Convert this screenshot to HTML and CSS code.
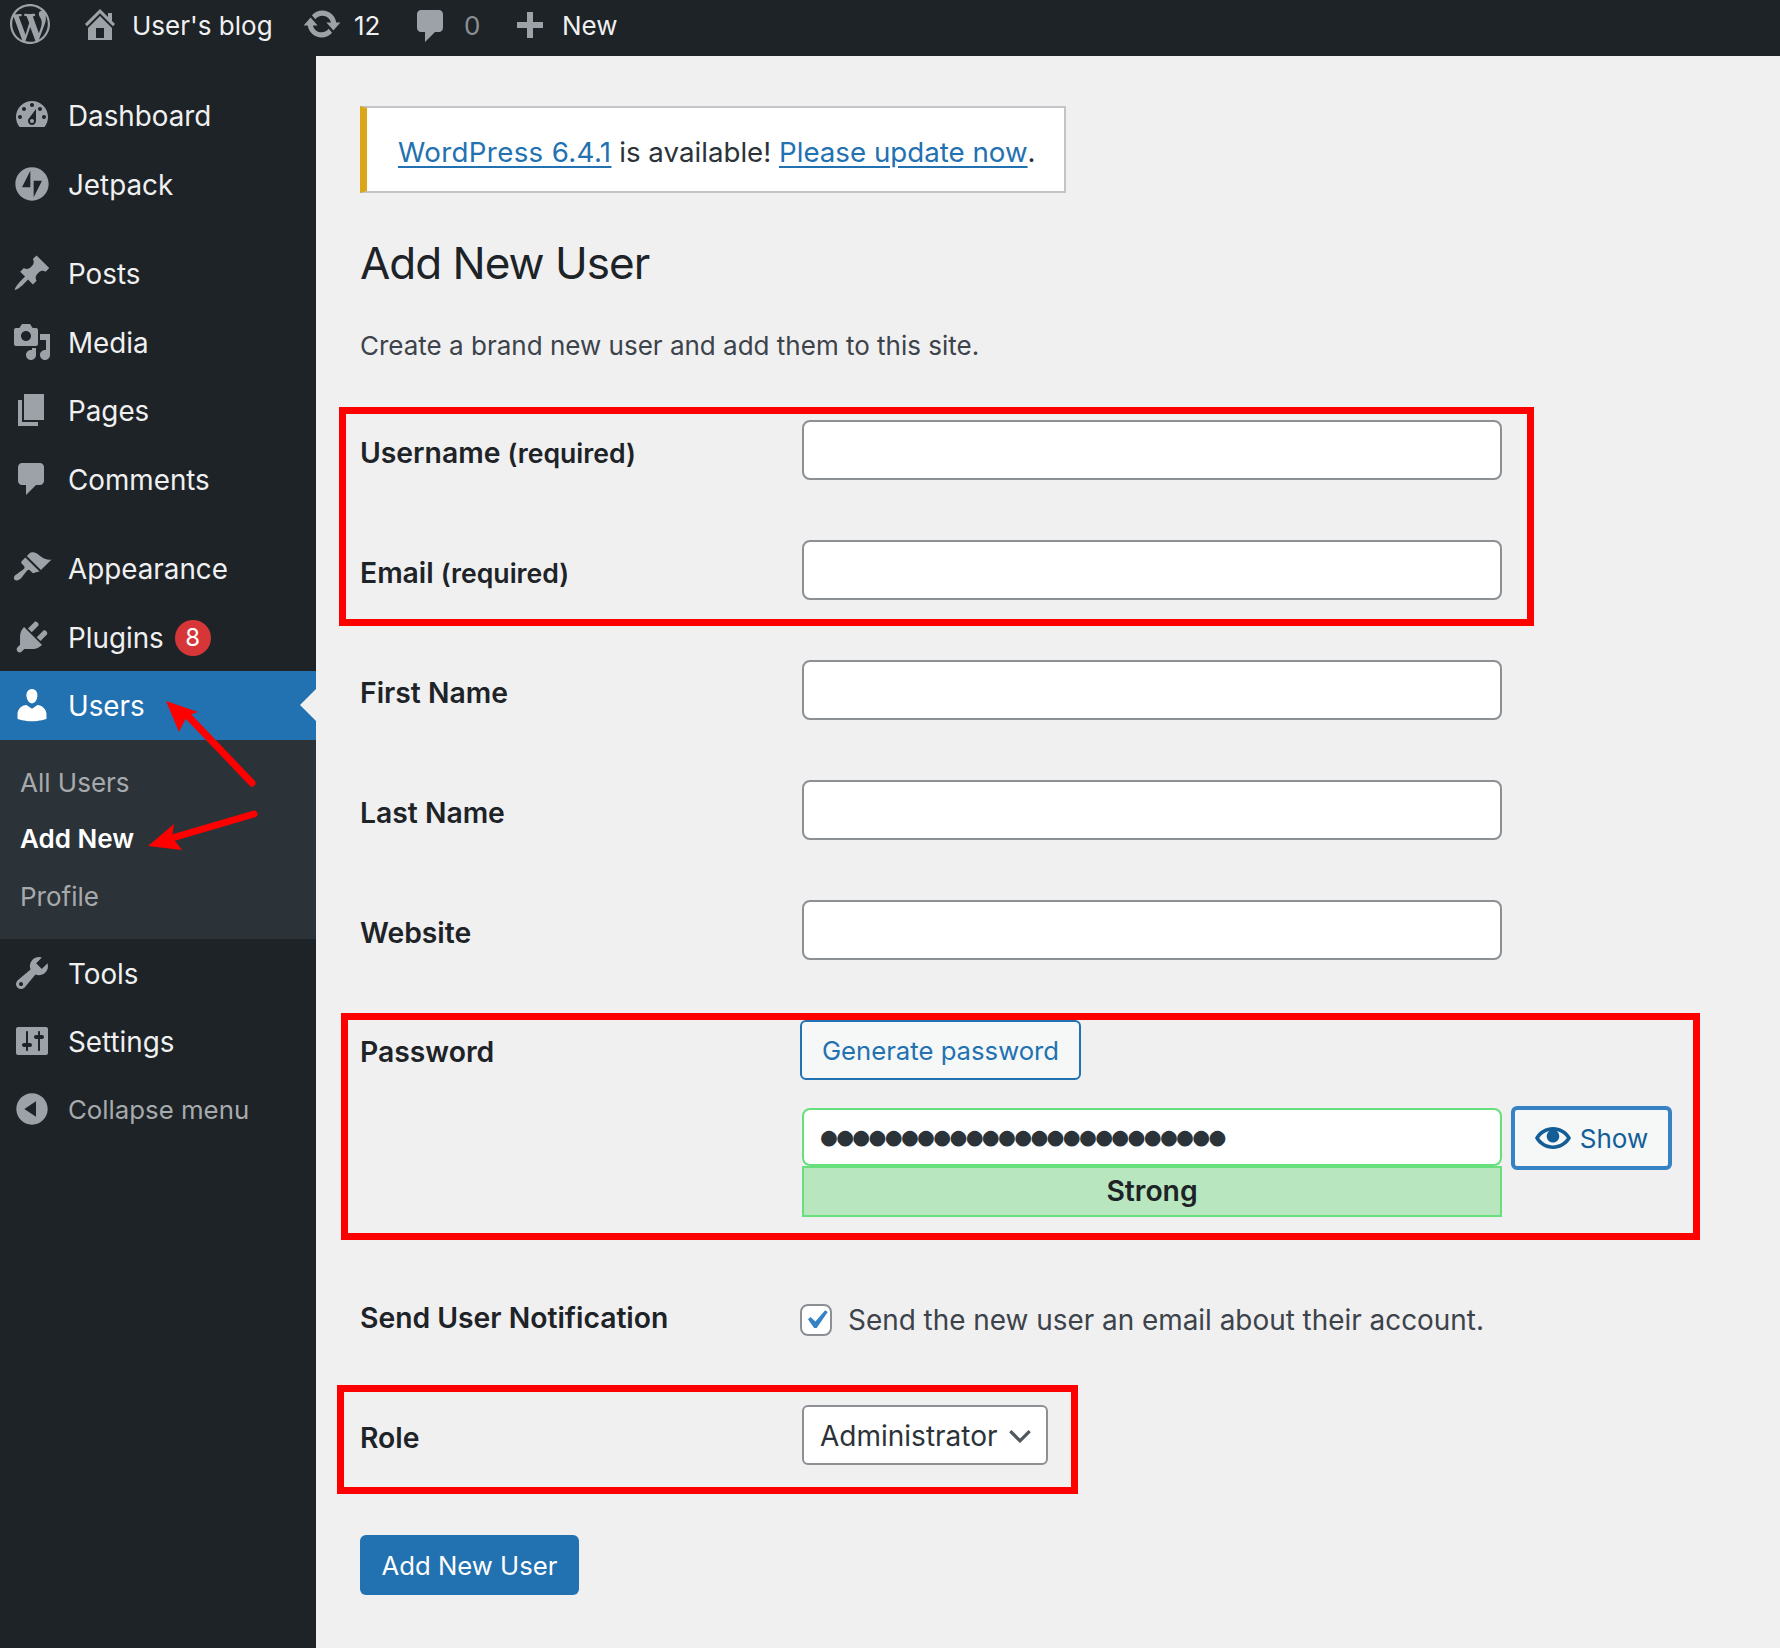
FILE: index.html
```html
<!DOCTYPE html>
<html lang="en">
<head>
<meta charset="utf-8">
<title>Add New User</title>
<link rel="stylesheet" href="styles.css">
</head>
<body>
<header class="topbar">
  <svg class="ti ti-wp" viewBox="0 0 20 20"><path d="M20 10c0-5.51-4.49-10-10-10C4.48 0 0 4.49 0 10c0 5.52 4.48 10 10 10 5.51 0 10-4.48 10-10zM7.78 15.37L4.37 6.22c.55-.02 1.17-.08 1.17-.08.5-.06.44-1.13-.06-1.11 0 0-1.45.11-2.37.11-.18 0-.37 0-.58-.01C4.12 2.69 6.87 1.11 10 1.11c2.33 0 4.45.87 6.05 2.34-.68-.11-1.65.39-1.65 1.58 0 .74.45 1.36.9 2.1.35.61.55 1.36.55 2.46 0 1.49-1.4 5-1.4 5l-3.03-8.37c.54-.02.82-.17.82-.17.5-.05.44-1.25-.06-1.22 0 0-1.44.12-2.38.12-.87 0-2.33-.12-2.33-.12-.5-.03-.56 1.2-.06 1.22l.92.08 1.26 3.41zM17.41 10c.24-.64.74-1.87.43-4.25.7 1.29 1.05 2.71 1.05 4.25 0 3.29-1.73 6.24-4.4 7.78.97-2.59 1.94-5.2 2.92-7.78zM6.1 18.09C3.12 16.65 1.11 13.53 1.11 10c0-1.3.23-2.48.72-3.59C3.25 10.3 4.67 14.2 6.1 18.09zm4.03-6.63l2.58 6.98c-.86.29-1.76.45-2.71.45-.79 0-1.57-.11-2.29-.33.81-2.38 1.62-4.74 2.42-7.1z"/></svg>
  <svg class="ti ti-home" viewBox="0 0 20 20"><path d="M16 8.5l1.53 1.53-1.06 1.06L10 4.62l-6.47 6.47-1.06-1.06L10 2.5l4 4v-2h2v4zm-6-2.46l6 5.99V18H4v-5.97zM12 17v-5H8v5h4z"/></svg>
  <span class="tt tt-blog">User's blog</span>
  <svg class="ti ti-update" viewBox="0 0 20 20"><path d="M10.2 3.28c3.53 0 6.43 2.61 6.92 6h2.08l-3.5 4-3.5-4h2.32c-.45-1.97-2.21-3.45-4.32-3.45-1.45 0-2.73.71-3.54 1.78L4.95 5.66C6.23 4.2 8.11 3.28 10.2 3.28zm-.4 13.44c-3.52 0-6.43-2.61-6.92-6H.8l3.5-4c1.17 1.33 2.33 2.67 3.5 4H5.48c.45 1.97 2.21 3.45 4.32 3.45 1.45 0 2.73-.71 3.54-1.78l1.71 1.95c-1.28 1.46-3.15 2.38-5.25 2.38z"/></svg>
  <span class="tt tt-count">12</span>
  <svg class="ti ti-comment" viewBox="0 0 20 20"><path d="M5 2h9c1.1 0 2 .9 2 2v7c0 1.1-.9 2-2 2h-2l-5 5v-5H5c-1.1 0-2-.9-2-2V4c0-1.1.9-2 2-2z"/></svg>
  <span class="tt tt-zero">0</span>
  <svg class="ti ti-plus" viewBox="0 0 20 20"><path d="M17 7v3h-5v5H9v-5H4V7h5V2h3v5h5z"/></svg>
  <span class="tt tt-new">New</span>
</header>

<div class="page">
  <nav class="sidebar">
    <ul class="menu">
      <li class="mi"><svg class="mic" viewBox="0 0 20 20"><path d="M3.76 16h12.48c1.1-1.37 1.76-3.11 1.76-5 0-4.42-3.58-8-8-8s-8 3.58-8 8c0 1.89.66 3.63 1.76 5zM10 4c.55 0 1 .45 1 1s-.45 1-1 1-1-.45-1-1 .45-1 1-1zM6 6c.55 0 1 .45 1 1s-.45 1-1 1-1-.45-1-1 .45-1 1-1zm8 0c.55 0 1 .45 1 1s-.45 1-1 1-1-.45-1-1 .45-1 1-1zm-5.37 5.55L12 7v6c0 1.1-.9 2-2 2s-2-.9-2-2c0-.57.24-1.08.63-1.45zM4 10c.55 0 1 .45 1 1s-.45 1-1 1-1-.45-1-1 .45-1 1-1zm12 0c.55 0 1 .45 1 1s-.45 1-1 1-1-.45-1-1 .45-1 1-1zm-5 3c0-.55-.45-1-1-1s-1 .45-1 1 .45 1 1 1 1-.45 1-1z" fill-rule="evenodd"/></svg>Dashboard</li>
      <li class="mi"><svg class="mic" viewBox="0 0 24 24"><path d="M12 2C6.477 2 2 6.477 2 12c0 5.523 4.477 10 10 10s10-4.477 10-10C22 6.477 17.523 2 12 2zM11 14H6l5-10v10zM13 20V10h5l-5 10z"/></svg>Jetpack</li>
      <li class="mi mi-gap"><svg class="mic" viewBox="0 0 20 20"><path d="M10.44 3.02l1.82-1.82 6.36 6.35-1.83 1.82c-1.05-.68-2.48-.57-3.41.36l-.75.75c-.92.93-1.04 2.35-.35 3.41l-1.83 1.82-2.41-2.41-2.8 2.79c-.42.42-3.38 2.71-3.8 2.29s1.86-3.39 2.28-3.81l2.79-2.79L4.1 9.36l1.83-1.82c1.05.69 2.48.57 3.4-.36l.75-.75c.93-.92 1.05-2.35.36-3.41z"/></svg>Posts</li>
      <li class="mi"><svg class="mic" viewBox="0 0 20 20"><path d="M13 11V4c0-.55-.45-1-1-1h-1.67L9 1H5L3.67 3H2c-.55 0-1 .45-1 1v7c0 .55.45 1 1 1h10c.55 0 1-.45 1-1zM7 4.5c1.38 0 2.5 1.12 2.5 2.5S8.38 9.5 7 9.5 4.5 8.38 4.5 7 5.62 4.5 7 4.5zM14 6h5v10.5c0 1.38-1.12 2.5-2.5 2.5S14 17.88 14 16.5s1.12-2.5 2.5-2.5c.17 0 .34.02.5.05V9h-3V6zm-4 8.05V13h2v3.5c0 1.38-1.12 2.5-2.5 2.5S7 17.88 7 16.5 8.12 14 9.5 14c.17 0 .34.02.5.05z"/></svg>Media</li>
      <li class="mi"><svg class="mic" viewBox="0 0 20 20"><path d="M6 15V2h10v13H6zm-1 1h8v2H3V5h2v11z"/></svg>Pages</li>
      <li class="mi"><svg class="mic" viewBox="0 0 20 20"><path d="M5 2h9c1.1 0 2 .9 2 2v7c0 1.1-.9 2-2 2h-2l-5 5v-5H5c-1.1 0-2-.9-2-2V4c0-1.1.9-2 2-2z"/></svg>Comments</li>
      <li class="mi mi-gap"><svg class="mic" viewBox="0 0 20 20"><path d="M14.48 11.06L7.41 3.99l1.5-1.5c.5-.56 2.3-.47 3.51.32 1.21.8 1.43 1.28 2.91 2.1 1.18.64 2.45 1.26 4.45.85zm-.71.71L6.7 4.7 4.93 6.47c-.39.39-.39 1.02 0 1.41l1.06 1.06c.39.39.39 1.03 0 1.42-.6.6-1.43 1.11-2.21 1.69-.35.26-.7.53-1.01.84C1.43 13.23.4 14.97 1.32 15.9c.92.92 2.67-.12 3.75-1.46.31-.31.58-.66.84-1.01.58-.78 1.09-1.61 1.69-2.21.39-.39 1.02-.39 1.41 0l1.06 1.06c.39.39 1.02.39 1.41 0z"/></svg>Appearance</li>
      <li class="mi"><svg class="mic" viewBox="0 0 20 20"><path d="M13.11 4.36L9.87 7.6 8 5.73l3.24-3.24c.35-.34 1.05-.2 1.56.32.52.51.66 1.21.31 1.55zm-8 1.77l.91-1.12 9.01 9.01-1.19.84c-.71.71-2.63 1.16-3.82 1.16H6.14L4.9 17.26c-.59.59-1.54.59-2.12 0-.59-.58-.59-1.53 0-2.12l1.24-1.24v-3.88c0-1.13.4-3.19 1.09-3.89zm7.26 3.97l3.24-3.24c.34-.35 1.04-.21 1.55.31.52.51.66 1.21.31 1.55l-3.24 3.25z"/></svg>Plugins<span class="badge">8</span></li>
      <li class="mi mi-cur"><svg class="mic" viewBox="0 0 20 20"><path d="M10 9.25c-2.27 0-2.73-3.44-2.73-3.44C7 4.02 7.82 2 9.97 2c2.16 0 2.98 2.02 2.71 3.81 0 0-.41 3.44-2.68 3.44zm0 2.57L12.72 10c2.39 0 4.52 2.33 4.52 4.53v2.49s-3.65 1.13-7.24 1.13c-3.65 0-7.24-1.13-7.24-1.13v-2.49c0-2.25 1.94-4.48 4.47-4.48z"/></svg>Users</li>
    </ul>
    <ul class="submenu">
      <li class="si">All Users</li>
      <li class="si si-cur">Add New</li>
      <li class="si si-last">Profile</li>
    </ul>
    <ul class="menu">
      <li class="mi"><svg class="mic" viewBox="0 0 20 20"><path d="M16.68 9.77c-1.34 1.34-3.3 1.67-4.95.99l-5.41 6.52c-.99.99-2.59.99-3.58 0s-.99-2.59 0-3.57l6.52-5.42c-.68-1.65-.35-3.61.99-4.95 1.28-1.28 3.12-1.62 4.72-1.06l-2.89 2.89 2.82 2.82 2.86-2.87c.53 1.58.18 3.39-1.08 4.65zM3.81 16.21c.4.39 1.04.39 1.43 0 .4-.4.4-1.04 0-1.43-.39-.4-1.03-.4-1.43 0-.39.39-.39 1.03 0 1.43z"/></svg>Tools</li>
      <li class="mi"><svg class="mic" viewBox="0 0 20 20"><path d="M18 16V4c0-.55-.45-1-1-1H3c-.55 0-1 .45-1 1v12c0 .55.45 1 1 1h14c.55 0 1-.45 1-1zM8 11h1c.55 0 1 .45 1 1s-.45 1-1 1H8v1.5c0 .28-.22.5-.5.5s-.5-.22-.5-.5V13H6c-.55 0-1-.45-1-1s.45-1 1-1h1V5.5c0-.28.22-.5.5-.5s.5.22.5.5V11zm5-2h-1c-.55 0-1-.45-1-1s.45-1 1-1h1V5.5c0-.28.22-.5.5-.5s.5.22.5.5V7h1c.55 0 1 .45 1 1s-.45 1-1 1h-1v5.5c0 .28-.22.5-.5.5s-.5-.22-.5-.5V9z"/></svg>Settings</li>
      <li class="mi mi-collapse"><svg class="mic" viewBox="0 0 20 20"><path d="M10 2.16c4.33 0 7.84 3.51 7.84 7.84s-3.51 7.84-7.84 7.84S2.16 14.33 2.16 10 5.71 2.16 10 2.16zm2 11.72V6.12L6.18 9.97z"/></svg>Collapse menu</li>
    </ul>
  </nav>

  <main class="main">
    <div class="notice"><a class="ver" href="#">WordPress 6.4.1</a> is available! <a href="#">Please update now</a>.</div>
    <h1 class="title">Add New User</h1>
    <p class="intro">Create a brand new user and add them to this site.</p>

    <form class="form">
      <div class="row"><label class="lab">Username <span class="req">(required)</span></label><input class="inp" type="text"></div>
      <div class="row"><label class="lab">Email <span class="req">(required)</span></label><input class="inp" type="text"></div>
      <div class="row"><label class="lab">First Name</label><input class="inp" type="text"></div>
      <div class="row"><label class="lab">Last Name</label><input class="inp" type="text"></div>
      <div class="row"><label class="lab">Website</label><input class="inp" type="text"></div>
      <div class="row row-pass">
        <label class="lab lab-pass">Password</label>
        <div class="pass">
          <button class="btn-gen" type="button">Generate password</button>
          <div class="pass-line">
            <div class="pass-col">
              <div class="pass-inp">●●●●●●●●●●●●●●●●●●●●●●●●●</div>
              <div class="strength">Strong</div>
            </div>
            <button class="btn-show" type="button"><svg class="eye" viewBox="0 0 20 20"><path d="M19.7 9.4C17.7 6 14 3.9 10 3.9S2.3 6 .3 9.4L0 10l.3.6c2 3.4 5.7 5.5 9.7 5.5s7.7-2.1 9.7-5.5l.3-.6-.3-.6zM10 14.1c-3.1 0-6-1.6-7.7-4.1C3.6 8 5.7 6.6 8 6.1c-.9.6-1.5 1.7-1.5 2.9 0 1.9 1.6 3.5 3.5 3.5s3.5-1.6 3.5-3.5c0-1.2-.6-2.2-1.5-2.9 2.3.5 4.4 1.9 5.7 3.9-1.7 2.5-4.6 4.1-7.7 4.1z"/></svg>Show</button>
          </div>
        </div>
      </div>
      <div class="row row-send">
        <label class="lab lab-send">Send User Notification</label>
        <div class="send">
          <span class="check"><svg viewBox="0 0 20 20"><path d="M14.83 4.89l1.34.94-5.81 8.38H9.02L5.78 9.67l1.34-1.25 2.57 2.4z"/></svg></span>
          <span>Send the new user an email about their account.</span>
        </div>
      </div>
      <div class="row row-role">
        <label class="lab">Role</label>
        <div class="select-wrap">
          <select class="select"><option>Administrator</option></select>
          <svg class="chev" viewBox="0 0 22 13"><path d="M2 2l9 9 9-9"/></svg>
        </div>
      </div>
      <button class="btn-primary" type="button">Add New User</button>
    </form>
  </main>
</div>

<div class="mark mark-a"></div>
<div class="mark mark-b"></div>
<div class="mark mark-c"></div>
<svg class="arrows" viewBox="0 0 320 940">
  <path class="shaft" d="M252 783L186 714"/>
  <path class="head" d="M166 701L198 712L187 716L179 732Z"/>
  <path class="shaft" d="M254 814L172 838"/>
  <path class="head" d="M148 846L174 824L172 837L182 850Z"/>
</svg>
</body>
</html>
```
FILE: styles.css
```css
* { box-sizing: border-box; }
html, body { margin: 0; padding: 0; }
body {
  width: 1780px;
  height: 1648px;
  overflow: hidden;
  position: relative;
  background: #f0f0f1;
  color: #1d2327;
  font-family: Inter, "Liberation Sans", sans-serif;
  font-size: 26px;
}
ul { list-style: none; margin: 0; padding: 0; }

.topbar {
  height: 56px;
  background: #1d2327;
  color: #f0f0f1;
  display: flex;
  align-items: center;
  padding: 0 0 8px 10px;
}
.ti { width: 40px; height: 40px; fill: #9ca2a7; flex: none; }
.ti-home { margin-left: 30px; }
.tt { font-size: 26px; white-space: nowrap; margin-top: 2px; }
.tt-blog { margin-left: 12px; width: 154px; }
.ti-update { margin-left: 16px; }
.tt-count { margin-left: 12px; width: 56px; }
.ti-comment { margin-top: 4px; margin-left: 1px; }
.tt-zero { margin-left: 13px; color: #8b9095; width: 29px; }
.ti-plus { margin-left: 16px; margin-top: 8px; }
.tt-new { margin-left: 13px; }

.page { display: flex; height: 1592px; }
.sidebar {
  width: 316px;
  flex: none;
  background: #1d2327;
  padding-top: 25px;
  color: #f0f0f1;
}
.mi {
  height: 68.4px;
  display: flex;
  align-items: center;
  padding: 2px 0 0 12px;
  font-size: 27.8px;
  position: relative;
}
.mic { width: 40px; height: 40px; fill: #9ca2a7; margin: -2px 16px 0 0; flex: none; }
.mi-gap { margin-top: 21.4px; }
.mi-cur { background: #2271b1; color: #fff; height: 69px; }
.mi-cur .mic { fill: #fff; }
.mi-cur::after {
  content: "";
  position: absolute;
  right: 0;
  top: 50%;
  margin-top: -16px;
  border: 16px solid transparent;
  border-right-color: #f0f0f1;
  border-left-width: 0;
}
.mi-collapse { color: #a7aaad; font-size: 25.8px; height: 66px; }
.badge {
  width: 36px;
  height: 36px;
  border-radius: 50%;
  background: #d63638;
  color: #fff;
  font-size: 24px;
  display: flex;
  align-items: center;
  justify-content: center;
  margin-left: 11px;
}
.submenu {
  background: #2c3338;
  padding: 15px 0 16px 20px;
}
.si { height: 56px; display: flex; align-items: center; color: #a7aaad; font-size: 26px; }
.si-cur { color: #fff; font-weight: 600; }
.si-last { padding-top: 3px; }

.main { flex: 1; padding: 50px 0 0 44px; }
.notice {
  width: 706px;
  height: 87px;
  background: #fff;
  border: 2px solid #c3c4c7;
  border-left: 7px solid #dba617;
  padding: 4px 0 0 31px;
  display: flex;
  align-items: center;
  white-space: pre;
  font-size: 27.7px;
  color: #2c3338;
}
.notice a { color: #2271b1; text-decoration: underline; text-underline-offset: 4px; }
.notice .ver { letter-spacing: .35px; }
.title {
  margin: 40px 0 0;
  font-size: 44px;
  font-weight: 400;
  line-height: 60px;
  letter-spacing: -1px;
  color: #1d2327;
}
.intro {
  margin: 35px 0 0;
  line-height: 36px;
  font-size: 26px;
  color: #3c434a;
}
.form { margin-top: 56px; display: flex; flex-direction: column; align-items: flex-start; }
.row { display: flex; align-items: flex-start; margin-bottom: 60px; }
.lab {
  width: 442px;
  flex: none;
  line-height: 36px;
  padding-top: 15px;
  font-size: 28.3px;
  font-weight: 600;
  color: #1d2327;
}
.req { font-size: 26.6px; }
.inp {
  width: 700px;
  height: 60px;
  background: #fff;
  border: 2px solid #8c8f94;
  border-radius: 8px;
  display: block;
}
.row-pass { margin-bottom: 86px; }
.lab-pass { padding-top: 14px; }
.pass { margin-left: -2px; }
.btn-gen {
  display: block;
  width: 281px;
  height: 60px;
  background: #f6f7f7;
  border: 2px solid #2271b1;
  border-radius: 6px;
  color: #2271b1;
  font: 25.7px Inter, sans-serif;
  padding: 0;
}
.pass-line { display: flex; align-items: flex-start; margin: 26px 0 0 2px; }
.pass-col { width: 700px; margin-top: 2px; }
.pass-inp {
  height: 58px;
  background: #fff;
  border: 2px solid #68de7c;
  border-radius: 8px;
  padding-left: 16px;
  font-family: "DejaVu Sans", sans-serif;
  font-size: 20.5px;
  letter-spacing: -1.7px;
  line-height: 54px;
  color: #2c3338;
}
.strength {
  height: 51px;
  background: #b8e6bf;
  border: 2px solid #68de7c;
  text-align: center;
  font-weight: 600;
  font-size: 28.3px;
  line-height: 47px;
  color: #1d2327;
}
.btn-show {
  width: 161px;
  height: 64px;
  margin-left: 9px;
  background: #f6f7f7;
  border: 4px solid #3582c4;
  border-radius: 6px;
  color: #135e96;
  font: 26px Inter, sans-serif;
  display: flex;
  align-items: center;
  justify-content: center;
  padding: 0;
}
.eye { width: 36px; height: 36px; fill: #135e96; margin-right: 9px; }
.row-send { margin-bottom: 70px; height: 32px; }
.lab-send { padding-top: 0; margin-top: -3px; }
.send {
  display: flex;
  align-items: center;
  margin-left: -2px;
  color: #3c434a;
  font-size: 27.9px;
  white-space: nowrap;
}
.check {
  width: 32px;
  height: 32px;
  background: #fff;
  border: 2px solid #8c8f94;
  border-radius: 8px;
  margin-right: 16px;
  flex: none;
  display: flex;
  align-items: center;
  justify-content: center;
}
.check svg { width: 38px; height: 38px; fill: #3582c4; flex: none; }
.row-role { margin-bottom: 70px; }
.select-wrap { position: relative; }
.select {
  appearance: none;
  display: block;
  width: 246px;
  height: 60px;
  background: #fff;
  border: 2px solid #8c8f94;
  border-radius: 6px;
  padding: 2px 0 0 16px;
  font: 28px Inter, sans-serif;
  color: #2c3338;
}
.chev {
  position: absolute;
  right: 16px;
  top: 24px;
  width: 24px;
  height: 14px;
  fill: none;
  stroke: #50575e;
  stroke-width: 3;
}
.btn-primary {
  width: 219px;
  height: 60px;
  background: #2271b1;
  border: 0;
  border-radius: 6px;
  color: #fff;
  font: 25.7px Inter, sans-serif;
  padding: 0;
}

.mark { position: absolute; border: 7px solid #ff0000; pointer-events: none; }
.mark-a { left: 339px; top: 407px; width: 1195px; height: 219px; }
.mark-b { left: 341px; top: 1013px; width: 1359px; height: 227px; }
.mark-c { left: 337px; top: 1385px; width: 741px; height: 109px; }
.arrows { position: absolute; left: 0; top: 0; width: 320px; height: 940px; pointer-events: none; }
.shaft { stroke: #ff0000; stroke-width: 7; stroke-linecap: round; fill: none; }
.head { fill: #ff0000; }
```
